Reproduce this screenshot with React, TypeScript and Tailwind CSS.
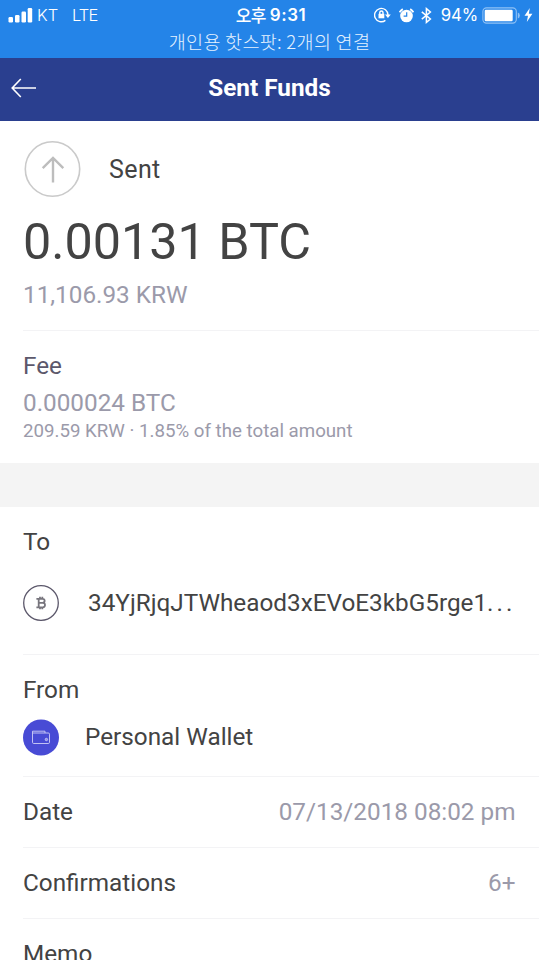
import React from "react";

function StatusBar() {
  return (
    <div className="h-[58px] bg-[#2484e8] text-white">
      <div className="grid h-[30px] grid-cols-[1fr_auto_1fr] items-center">
        <div className="flex items-center pl-[8px] font-['Inter','Liberation_Sans',sans-serif] text-[16.5px] leading-[30px]">
          <svg width="25" height="15" viewBox="0 0 25 15" fill="#fff">
            <rect x="0.5" y="9" width="4.5" height="5.5" rx="1.2" />
            <rect x="7" y="7" width="4.5" height="7.5" rx="1.2" />
            <rect x="13.5" y="3.5" width="4.5" height="11" rx="1.2" />
            <rect x="19.7" y="0" width="4.5" height="14.5" rx="1.2" />
          </svg>
          <span className="ml-[4px] w-[35px] font-light">KT</span>
          <span className="font-light tracking-[-0.9px]">LTE</span>
        </div>
        <div className="flex items-center gap-[5px] whitespace-nowrap pl-[3px] leading-[30px]">
          <span className="w-[29px] font-['Noto_Sans_CJK_KR',sans-serif] text-[17px] font-medium tracking-[-0.8px]">오후</span>
          <span className="font-['Inter','Liberation_Sans',sans-serif] text-[17px] font-semibold tracking-[0.5px]">9:31</span>
        </div>
        <div className="flex items-center justify-end pr-[6px]">
          <svg width="17" height="16" viewBox="0 0 17 16" fill="none" stroke="#fff" strokeWidth="1.4">
            <path d="M11.4 13.4A6.7 6.7 0 1 1 14 8" />
            <path d="M11 7.4h5.8L13.9 10.9z" fill="#fff" stroke="none" />
            <rect x="4.5" y="6.8" width="5.8" height="4.5" fill="#fff" stroke="none" />
            <path d="M5.8 7V5.6a1.6 1.6 0 0 1 3.2 0V7" />
          </svg>
          <svg className="ml-[8px]" width="15" height="15" viewBox="0 0 15 15">
            <circle cx="7.5" cy="8" r="6.3" fill="#fff" />
            <path d="M0.6 4.3A8 8 0 0 1 3.8 1.1M11.2 1.1A8 8 0 0 1 14.4 4.3" stroke="#fff" strokeWidth="1.8" fill="none" />
            <path d="M7.7 4.2V8.2H4.6" stroke="#2484e8" strokeWidth="1.2" fill="none" />
          </svg>
          <svg className="ml-[7px]" width="11" height="17" viewBox="0 0 11 17" fill="none" stroke="#fff" strokeWidth="1.5">
            <path d="M0.8 4.8L9.4 12L5.4 15.4V1.6L9.4 5L0.8 12.2" />
          </svg>
          <span className="ml-[9px] font-['Inter','Liberation_Sans',sans-serif] text-[16.8px] leading-[30px] tracking-[-0.2px]">94%</span>
          <svg className="ml-[4px]" width="39" height="17" viewBox="0 0 39 17">
            <rect x="0.9" y="0.9" width="33.4" height="15.2" rx="3.6" fill="none" stroke="#8fc1f5" strokeWidth="1.1" />
            <rect x="2.7" y="2.8" width="28" height="11.4" rx="1.2" fill="#fff" />
            <path d="M35.8 5.5q2 .7 2 3t-2 3z" fill="#8fc1f5" />
          </svg>
          <svg className="ml-[3px]" width="9" height="14" viewBox="0 0 9 14" fill="#fff">
            <path d="M5.8 0L0.5 7.8H4L2.8 14L8.4 5.8H4.8z" />
          </svg>
        </div>
      </div>
      <div className="mt-[-1px] text-center font-['Noto_Sans_CJK_KR',sans-serif] text-[18.5px] font-light leading-[25px] tracking-[0.3px] text-[#e6f2ff]">
        개인용 핫스팟: 2개의 연결
      </div>
    </div>
  );
}

function TitleBar() {
  return (
    <header className="grid h-[63px] grid-cols-[60px_1fr_60px] items-center bg-[#2a3f8f] text-white">
      <svg className="mb-[4px] ml-[11px]" width="26" height="20" viewBox="0 0 26 20" fill="none" stroke="#fff" strokeWidth="1.6">
        <path d="M25 10H1.3M9.8 1L1.2 10L9.8 19" />
      </svg>
      <h1 className="mb-[3px] text-center text-[24.3px] font-bold leading-[30px]">Sent Funds</h1>
    </header>
  );
}

function DetailRow({ label, value }: { label: string; value: string }) {
  return (
    <div className="ml-[23px] flex h-[71px] items-center justify-between border-b border-[#f3f3f5] pr-[23.5px]">
      <span>{label}</span>
      <span className="text-[#9b9aaa]">{value}</span>
    </div>
  );
}

export default function App() {
  return (
    <div className="h-[960px] w-[539px] overflow-hidden bg-white font-['Roboto',sans-serif] text-[24.3px] leading-[30px] text-[#434343]">
      <StatusBar />
      <TitleBar />
      <section className="ml-[23px] h-[210px] border-b border-[#f3f3f5] pt-[20px]">
        <div className="flex items-center gap-[28px]">
          <svg className="ml-px" width="57" height="57" viewBox="0 0 57 57" fill="none">
            <circle cx="28.5" cy="28" r="27.2" stroke="#cacaca" strokeWidth="1.6" />
            <path d="M29 41.5V17M18.7 27.2L29 16.9L39.3 27.2" stroke="#bdbdbd" strokeWidth="2.4" />
          </svg>
          <span className="text-[25px] tracking-[0.4px]">Sent</span>
        </div>
        <div className="mt-[14px] text-[50.3px] leading-[60px]">0.00131 BTC</div>
        <div className="mt-[8px] text-[#9b9aaa]">11,106.93 KRW</div>
      </section>
      <section className="ml-[23px] h-[132px] pt-[20px] text-[#9b9aaa]">
        <div className="text-[#5c586b]">Fee</div>
        <div className="mt-[7px]">0.000024 BTC</div>
        <div className="mt-[1px] text-[18.7px] leading-[24px]">209.59 KRW · 1.85% of the total amount</div>
      </section>
      <div className="h-[44px] bg-[#f4f4f4]" />
      <section className="ml-[23px] h-[148px] border-b border-[#f3f3f5] pt-[20px]">
        <div>To</div>
        <div className="mt-[28px] flex items-center">
          <svg width="36" height="36" viewBox="0 0 36 36" fill="none">
            <circle cx="18" cy="18" r="17.3" stroke="#5c586b" strokeWidth="1.3" />
            <path d="M13.4 13.8h6.2a2 2 0 0 1 0 4.1H15.8M19.8 17.9a2.2 2.2 0 0 1 0 4.4H13.4M15.7 13.8v8.5M17 11.8v2M19.3 11.8v2M17 22.3v2M19.3 22.3v2" stroke="#77757d" strokeWidth="1.8" />
          </svg>
          <span className="ml-[29px] whitespace-nowrap">
            34YjRjqJTWheaod3xEVoE3kbG5rge1<span className="tracking-[3px]">...</span>
          </span>
        </div>
      </section>
      <section className="ml-[23px] h-[122px] border-b border-[#f3f3f5] pt-[20px]">
        <div>From</div>
        <div className="mt-[14px] flex items-center">
          <svg width="36" height="37" viewBox="0 0 36 37" fill="none">
            <circle cx="18" cy="18.5" r="18" fill="#484bd5" />
            <path d="M9.5 14V23.3a1.2 1.2 0 0 0 1.2 1.2H25.3a1.2 1.2 0 0 0 1.2-1.2V15.2A1.2 1.2 0 0 0 25.3 14zM9.5 14V12.2H22V14" stroke="#cfcff6" strokeWidth="0.9" />
            <circle cx="23.4" cy="20.5" r="1.2" fill="#8f91e8" stroke="#cfcff6" strokeWidth="0.8" />
          </svg>
          <span className="mb-px ml-[26px]">Personal Wallet</span>
        </div>
      </section>
      <DetailRow label="Date" value="07/13/2018 08:02 pm" />
      <DetailRow label="Confirmations" value="6+" />
      <DetailRow label="Memo" value="" />
    </div>
  );
}
